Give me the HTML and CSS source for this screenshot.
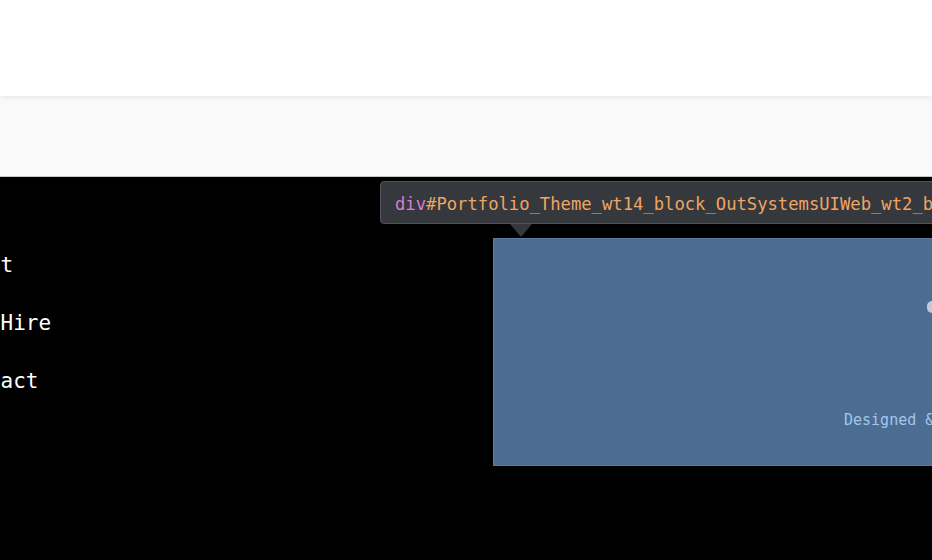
FILE: index.html
```html
<!DOCTYPE html>
<html lang="en">
<head>
    <meta charset="UTF-8">
    <title>Portfolio</title>
    <link rel="stylesheet" href="styles.css">
</head>
<body>
<div class="header"></div>
<div class="subbar"></div>
<div class="main">
    <ul class="nav">
        <li>About</li>
        <li>For Hire</li>
        <li>Contact</li>
    </ul>
    <div class="stage">
        <div class="inspect-tip">
            <span class="tag">div</span><span class="sel">#Portfolio_Theme_wt14_block_OutSystemsUIWeb_wt2_block_wtFooter</span>
        </div>
        <div class="footer-panel">
            <div class="mark"></div>
            <div class="credit">Designed &amp; built</div>
        </div>
    </div>
</div>
</body>
</html>
```

FILE: styles.css
```css
html, body {
    margin: 0;
    padding: 0;
    overflow: hidden;
    height: 100%;
}

body {
    font-family: "DejaVu Sans Mono", "Liberation Mono", monospace;
    background: #000;
}

.header {
    height: 96px;
    background: #fff;
    position: relative;
    z-index: 1;
    box-shadow: 0 1px 5px rgba(0, 0, 0, 0.09);
}

.subbar {
    height: 80px;
    background: #f9f9f9;
    border-bottom: 1px solid #c6c6c6;
}

.main {
    display: flex;
    height: 383px;
    background: #000;
}

.nav {
    list-style: none;
    margin: 0 0 0 -50px;
    padding: 59px 0 0 0;
    flex: 0 0 543px;
    color: #fff;
    font-size: 21px;
    line-height: 58px;
}

.stage {
    position: relative;
    padding-top: 61px;
    flex: 1;
}

.footer-panel {
    width: 460px;
    height: 226px;
    background: #4a6d91;
    border: 1px solid #5a7ca0;
    box-sizing: content-box;
    overflow: hidden;
}

.mark {
    width: 10px;
    height: 12px;
    margin: 62px 0 0 433px;
    border-radius: 7px 7px 2px 7px;
    background: #c3cad3;
}

.credit {
    margin: 98px 0 0 350px;
    color: #a3c6ec;
    font-size: 15px;
    white-space: nowrap;
}

.inspect-tip {
    position: absolute;
    left: -113px;
    top: 4px;
    height: 43px;
    padding: 2px 14px 0;
    box-sizing: border-box;
    display: flex;
    align-items: center;
    background: #35383d;
    border: 1px solid #50545a;
    border-radius: 4px;
    font-size: 17.2px;
    white-space: nowrap;
    z-index: 2;
}

.inspect-tip::after {
    content: "";
    position: absolute;
    left: 129px;
    bottom: -14px;
    border-left: 11px solid transparent;
    border-right: 11px solid transparent;
    border-top: 13px solid #35383d;
}

.tag {
    color: #d47fd6;
}

.sel {
    color: #f0a562;
}
```
